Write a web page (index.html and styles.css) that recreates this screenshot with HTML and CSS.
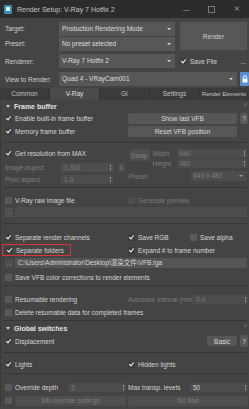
FILE: index.html
```html
<!DOCTYPE html>
<html lang="en">
<head>
  <meta charset="UTF-8" />
  <title>Render Setup</title>
  <link rel="stylesheet" href="styles.css">
</head>
<body>
<div class="window">

  <div class="titlebar">
    <span class="app-icon"><span></span></span>
    <span class="title">Render Setup: V-Ray 7 Hotfix 2</span>
    <span class="win-btn">&#8212;</span>
    <span class="win-btn max"></span>
    <span class="win-btn">&#10005;</span>
  </div>

  <div class="top">
    <label class="lbl r1">Target:</label>
    <div class="select r1 start">Production Rendering Mode<span class="arrow"></span></div>
    <button class="render-btn">Render</button>

    <label class="lbl r2">Preset:</label>
    <div class="select r2 start">No preset selected<span class="arrow"></span></div>

    <label class="lbl r3">Renderer:</label>
    <div class="select r3">V-Ray 7 Hotfix 2<span class="arrow"></span></div>
    <div class="savefile r3">
      <span class="cb on"></span><span>Save File</span><span class="dots">...</span>
    </div>

    <label class="lbl r4">View to Render:</label>
    <div class="view r4">
      <div class="select wide">Quad 4 - VRayCam001<span class="arrow"></span></div>
      <span class="lock">
        <svg width="6" height="8" viewBox="0 0 6 8"><path d="M1.5 3.5V2.2a1.5 1.5 0 0 1 3 0v1.3" fill="none" stroke="#fff" stroke-width="0.9"/><rect x="0.5" y="3.5" width="5" height="4" fill="#fff"/></svg>
      </span>
    </div>
  </div>

  <div class="tabs">
    <span class="tab">Common</span>
    <span class="tab active">V-Ray</span>
    <span class="tab">GI</span>
    <span class="tab">Settings</span>
    <span class="tab last">Render Elements</span>
  </div>

  <div class="panel">
    <div class="rollout-head"><span class="tri"></span>Frame buffer<span class="pin"></span></div>

    <div class="row h13">
      <div class="half"><span class="cb on"></span>Enable built-in frame buffer</div>
      <div class="half right"><button class="btn grow">Show last VFB</button><button class="btn q">?</button></div>
    </div>
    <div class="row h13">
      <div class="half"><span class="cb on"></span>Memory frame buffer</div>
      <div class="half right"><button class="btn grow">Reset VFB position</button><span class="qspace"></span></div>
    </div>
    <div class="sep sa"></div>

    <div class="res">
      <div class="res-left">
        <div class="line l1"><span class="cb on"></span>Get resolution from MAX</div>
        <div class="line l2 dim">
          <span class="flabel">Image aspect</span>
          <span class="spin">1.333<span class="sp"></span></span>
          <span class="mini">L</span>
        </div>
        <div class="line l3 dim">
          <span class="flabel">Pixel aspect</span>
          <span class="spin">1.0<span class="sp"></span></span>
        </div>
      </div>
      <div class="res-right dim">
        <div class="wh">
          <button class="btn swap">Swap</button>
          <div class="wh-fields">
            <div class="whrow"><span class="whlbl">Width</span><span class="spin full">640<span class="sp"></span></span></div>
            <div class="whrow"><span class="whlbl">Height</span><span class="spin full">480<span class="sp"></span></span></div>
          </div>
        </div>
        <div class="whrow preset"><span class="plbl">Preset</span><span class="select dimsel">640 x 480<span class="arrow"></span></span></div>
      </div>
    </div>
    <div class="sep sb"></div>

    <div class="row h12">
      <div class="half"><span class="cb"></span>V-Ray raw image file</div>
      <div class="half right dim"><span class="cb"></span>Generate preview</div>
    </div>
    <div class="pathrow mt1">
      <span class="dotbtn">...</span><span class="path empty"></span>
    </div>
    <div class="sep sc"></div>

    <div class="row h12">
      <div class="half"><span class="cb on"></span>Separate render channels</div>
      <div class="half right"><span class="cb on"></span><span class="w-rgb">Save RGB</span><span class="cb"></span>Save alpha</div>
    </div>
    <div class="row h12 mt1">
      <div class="half"><span class="hl"><span class="cb on"></span>Separate folders</span></div>
      <div class="half right"><span class="cb on"></span>Expand # to frame number</div>
    </div>
    <div class="pathrow mt2">
      <span class="dotbtn">...</span><span class="path">C:\Users\Administrator\Desktop\渲染文件\VFB.tga</span>
    </div>
    <div class="row h12 mt3">
      <div class="full"><span class="cb"></span>Save VFB color corrections to render elements</div>
    </div>
    <div class="sep sd"></div>

    <div class="row h12">
      <div class="half"><span class="cb"></span>Resumable rendering</div>
      <div class="half right dim"><span class="alabel">Autosave interval (min)</span><span class="spin full">0.0<span class="sp"></span></span></div>
    </div>
    <div class="row h12 mt1">
      <div class="full"><span class="cb"></span>Delete resumable data for completed frames</div>
    </div>
    <div class="rollout-head gs"><span class="tri"></span>Global switches<span class="pin"></span></div>

    <div class="row h12">
      <div class="half"><span class="cb on"></span>Displacement</div>
      <div class="half right"><span class="grow"></span><button class="btn basic">Basic</button><button class="btn q">?</button></div>
    </div>
    <div class="sep se"></div>
    <div class="row h12">
      <div class="half"><span class="cb on"></span>Lights</div>
      <div class="half right"><span class="cb on"></span>Hidden lights</div>
    </div>
    <div class="sep sf"></div>
    <div class="row h12">
      <div class="half"><span class="cb"></span><span class="olabel">Override depth</span><span class="spin full dim">5<span class="sp"></span></span></div>
      <div class="half right"><span class="mlabel">Max transp. levels</span><span class="spin full">50<span class="sp"></span></span></div>
    </div>
    <div class="row h11 mt2">
      <div class="half"><span class="cb"></span><button class="btn grow dimbtn">Mtl override settings</button></div>
      <div class="half right"><button class="btn grow dimbtn">No Mat</button></div>
    </div>
  </div>
</div>
</body>
</html>
```

FILE: styles.css
```css
* {
  box-sizing: border-box;
}
body {
  margin: 0;
  background: #444;
  font-family: 'Liberation Sans', Arial, sans-serif;
  font-size: 6.5px;
  color: #d6d6d6;
}
.window {
  width: 249px;
  height: 409px;
  overflow: hidden;
  background: #444;
}
button {
  font-family: inherit;
  font-size: inherit;
  color: inherit;
  margin: 0;
  padding: 0;
}

/* title bar */
.titlebar {
  height: 18px;
  background: #2c2c2c;
  display: flex;
  align-items: center;
  padding-left: 4px;
  color: #c4c4c4;
  font-size: 7px;
}
.app-icon {
  width: 8px;
  height: 9px;
  background: #3a8fb0;
  border-radius: 1px;
  display: flex;
  align-items: center;
  justify-content: center;
  margin-right: 5px;
}
.app-icon span {
  width: 4px;
  height: 4px;
  background: #d8eef6;
}
.title {
  flex: 1;
}
.win-btn {
  width: 25px;
  text-align: center;
  color: #9a9a9a;
  font-size: 7px;
}
.win-btn.max {
  display: flex;
  justify-content: center;
}
.win-btn.max::before {
  content: "";
  width: 5px;
  height: 5px;
  border: 1px solid #777;
}

/* top form */
.top {
  display: grid;
  grid-template-columns: 49px 116px 1fr;
  grid-template-rows: 15px 15px 18px 18px;
  column-gap: 5px;
  padding: 4px 2px 0 5px;
  height: 70px;
}
.lbl {
  grid-column: 1;
  align-self: center;
  color: #d0d0d0;
}
.r1 { grid-row: 1; }
.r2 { grid-row: 2; }
.r3 { grid-row: 3; }
.r4 { grid-row: 4; }
.r1.lbl, .r2.lbl { align-self: start; line-height: 14px; }
.select {
  position: relative;
  height: 14px;
  background: #575757;
  line-height: 14px;
  padding-left: 3px;
  color: #dedede;
  white-space: nowrap;
  overflow: hidden;
  align-self: center;
}
.select.start {
  align-self: start;
}
.top > .select {
  grid-column: 2;
}
.arrow {
  position: absolute;
  right: 4px;
  top: 6px;
  border-left: 2px solid transparent;
  border-right: 2px solid transparent;
  border-top: 2px solid #ddd;
}
.render-btn {
  grid-column: 3;
  grid-row: 1 / span 2;
  height: 28px;
  background: #575757;
  border: none;
  color: #cfcfcf;
  font-size: 6.5px;
}
.savefile {
  grid-column: 3;
  display: flex;
  align-items: center;
  align-self: center;
}
.savefile .dots {
  margin-left: auto;
  margin-right: 1px;
}
.view {
  grid-column: 2 / span 2;
  display: flex;
  align-items: center;
  align-self: center;
  margin-right: -2px;
}
.select.wide {
  flex: 1;
}
.lock {
  width: 9px;
  height: 14px;
  margin-left: 3px;
  background: #5a8fd6;
  border-radius: 1px;
  display: flex;
  align-items: center;
  justify-content: center;
}

/* tabs */
.tabs {
  display: flex;
  height: 12px;
  background: #3b3b3b;
  white-space: nowrap;
  overflow: hidden;
}
.tab {
  width: 50px;
  flex: none;
  text-align: center;
  line-height: 12px;
  color: #c0c0c0;
  border-right: 1px solid #333;
}
.tab.active {
  background: #4b4b4b;
  color: #e0e0e0;
}
.tab.last {
  width: 49px;
  border: none;
  text-align: left;
  padding-left: 2px;
  font-size: 5.9px;
  letter-spacing: -0.1px;
}

/* panel */
.panel {
  padding: 0 2px 0 2px;
  border-left: 1px solid #3a3a3a;
}
.rollout-head {
  position: relative;
  height: 12px;
  display: flex;
  align-items: center;
  font-weight: bold;
  color: #e2e2e2;
  padding-left: 3px;
  font-size: 7px;
}
.rollout-head.gs {
  height: 15px;
  padding-top: 1px;
  border-top: 1px solid #363636;
  margin-top: 2px;
}
.tri {
  width: 0;
  height: 0;
  border-left: 2px solid transparent;
  border-right: 2px solid transparent;
  border-top: 3px solid #ccc;
  margin-right: 4px;
}
.pin {
  position: absolute;
  right: 0;
  top: 3px;
  width: 3px;
  height: 3px;
  background: #5a5a5a;
}
.row {
  display: flex;
  align-items: center;
}
.h11 { height: 11px; }
.h12 { height: 12px; }
.h13 { height: 13px; }
.mt1 { margin-top: 1px; }
.mt2 { margin-top: 2px; }
.mt3 { margin-top: 3px; }
.half {
  width: 123px;
  flex: none;
  display: flex;
  align-items: center;
  padding-left: 2px;
  white-space: nowrap;
  height: 100%;
}
.half.right {
  width: 122px;
  padding-left: 2px;
}
.full {
  display: flex;
  align-items: center;
  padding-left: 2px;
  white-space: nowrap;
}
.cb {
  width: 7px;
  height: 7px;
  flex: none;
  background: #595959;
  margin-right: 3px;
  position: relative;
}
.cb.on {
  background: #3d3d3d;
}
.cb.on::after {
  content: "";
  position: absolute;
  left: 2px;
  top: 0;
  width: 2px;
  height: 4px;
  border-right: 1.2px solid #f2f2f2;
  border-bottom: 1.2px solid #f2f2f2;
  transform: rotate(40deg);
}
.btn {
  height: 100%;
  background: #575757;
  border: none;
  border-radius: 2px;
  color: #dadada;
}
.grow {
  flex: 1;
}
.btn.q, .qspace {
  width: 8px;
  margin-left: 3px;
  flex: none;
}
.row.h13 .btn {
  height: 11px;
}
.dim {
  color: #7c7c7c;
}
.dim .cb {
  background: #4f4f4f;
}

/* separators: height includes the 1px line */
.sep {
  border-bottom: 1px solid #363636;
}
.sa { height: 5px; margin-bottom: 3px; }
.sb { height: 5px; margin-bottom: 6px; }
.sc { height: 7px; margin-bottom: 7px; }
.sd { height: 3px; margin-bottom: 7px; }
.se { height: 6px; margin-bottom: 5px; }
.sf { height: 4px; margin-bottom: 7px; }

/* resolution block */
.res {
  display: flex;
  height: 37px;
}
.res-left {
  width: 123px;
  padding-left: 2px;
}
.line {
  display: flex;
  align-items: center;
  height: 12px;
}
.line.l1 { margin-top: 1px; }
.line.l2 { margin-top: 2px; }
.flabel {
  width: 56px;
}
.spin {
  position: relative;
  height: 9px;
  line-height: 9px;
  width: 52px;
  background: #4d4d4d;
  padding-left: 3px;
}
.spin.full {
  flex: 1;
}
.sp {
  position: absolute;
  right: 2px;
  top: 2px;
  width: 1px;
  height: 5px;
  border-top: 2px solid #999;
  border-bottom: 2px solid #999;
}
.mini {
  width: 7px;
  height: 9px;
  margin-left: 5px;
  background: #4d4d4d;
  text-align: center;
  line-height: 9px;
}
.res-right {
  width: 122px;
  padding-left: 3px;
}
.wh {
  display: flex;
  margin-top: 2px;
  height: 20px;
}
.btn.swap {
  width: 21px;
  height: 12px;
  margin-top: 1px;
  background: #4f4f4f;
  color: #808080;
}
.wh-fields {
  flex: 1;
  margin-left: 3px;
}
.whrow {
  display: flex;
  align-items: center;
  height: 10px;
}
.whlbl {
  width: 24px;
}
.whrow.preset {
  height: 12px;
  margin-top: 2px;
}
.plbl {
  width: 62px;
}
.select.dimsel {
  flex: 1;
  height: 10px;
  line-height: 10px;
  background: #4d4d4d;
  color: #808080;
}
.select.dimsel .arrow {
  top: 4px;
  border-top-color: #999;
}

/* paths */
.pathrow {
  display: flex;
  align-items: center;
  height: 10px;
  padding-left: 2px;
}
.dotbtn {
  width: 8px;
  height: 9px;
  background: #4f4f4f;
  color: #888;
  text-align: center;
  line-height: 7px;
  flex: none;
}
.path {
  flex: 1;
  height: 10px;
  margin-left: 2px;
  background: #555;
  line-height: 10px;
  padding-left: 3px;
  white-space: nowrap;
  overflow: hidden;
  color: #d8d8d8;
  font-family: 'Liberation Sans', 'Noto Sans CJK SC', sans-serif;
}
.path.empty {
  background: #4d4d4d;
}
.hl {
  display: flex;
  align-items: center;
  height: 12px;
  margin-left: -3px;
  padding-left: 3px;
  width: 69px;
  border: 1px solid #d8343a;
}
.w-rgb {
  width: 52px;
}
.alabel {
  width: 65px;
}
.olabel {
  width: 53px;
}
.mlabel {
  width: 62px;
}
.btn.basic {
  width: 30px;
  height: 10px;
}
.btn.dimbtn {
  height: 10px;
  background: #4f4f4f;
  color: #7e7e7e;
}
```
